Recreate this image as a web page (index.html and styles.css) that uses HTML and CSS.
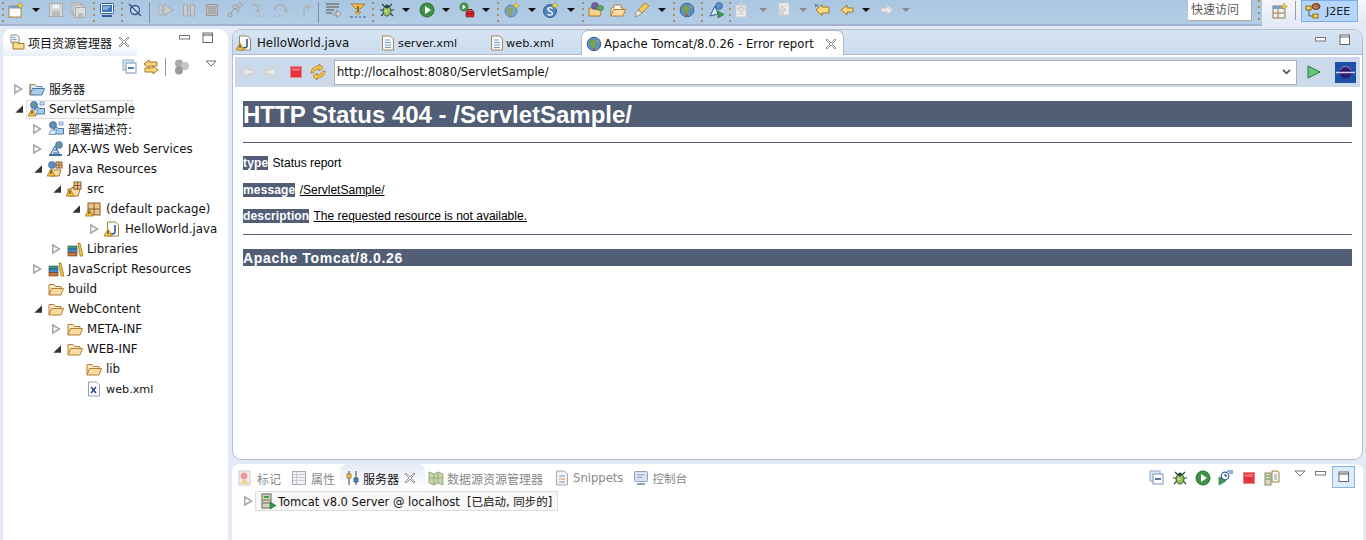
FILE: index.html
```html
<!DOCTYPE html>
<html lang="zh">
<head>
<meta charset="utf-8">
<title>Eclipse J2EE</title>
<link rel="stylesheet" href="styles.css">
</head>
<body>
<svg class="defs" aria-hidden="true">
  <defs>
    <symbol id="warn" viewBox="0 0 16 16"><path d="M4 8 8 15H0z" fill="#f6c544" stroke="#a8741a" stroke-width=".8"/><path d="M4 10v3" stroke="#222" stroke-width="1"/></symbol>
    <symbol id="new" viewBox="0 0 16 16"><rect x="1" y="4" width="12" height="11" fill="#fff" stroke="#a5853a"/><rect x="1" y="4" width="12" height="2.5" fill="#7a9cc8"/><path d="M12 0l1 2.5 2.5 1-2.5 1-1 2.5-1-2.5-2.5-1 2.500-1z" fill="#f8d648" stroke="#b08a20" stroke-width=".5"/></symbol>
    <symbol id="save" viewBox="0 0 16 16"><rect x="1.500" y="1.500" width="13" height="13" fill="#d8d8d8" stroke="#aaa"/><rect x="4" y="2" width="8" height="5" fill="#f2f2f2" stroke="#b5b5b5" stroke-width=".6"/><rect x="4" y="9" width="8" height="5" fill="#bbb"/></symbol>
    <symbol id="saveall" viewBox="0 0 16 16"><rect x="1" y="1" width="10" height="10" fill="#d8d8d8" stroke="#aaa"/><rect x="3" y="3" width="10" height="10" fill="#d8d8d8" stroke="#aaa"/><rect x="5.500" y="5.500" width="10" height="10" fill="#ddd" stroke="#aaa"/><rect x="8" y="11" width="5" height="4" fill="#bbb"/></symbol>
    <symbol id="monitor" viewBox="0 0 16 16"><rect x="1.500" y="1.500" width="13" height="10" rx="1" fill="#fff" stroke="#2e5c98"/><rect x="3" y="3" width="10" height="7" fill="#3f74b8"/><path d="M4 5h7M4 7h5" stroke="#cfe0f4"/><path d="M3 14h10" stroke="#2e5c98" stroke-width="2"/></symbol>
    <symbol id="skip" viewBox="0 0 16 16"><circle cx="8" cy="8" r="4.500" fill="#c9d6ea" stroke="#2c4f86" stroke-width="1.300"/><path d="M2 2 14 14" stroke="#2c4f86" stroke-width="1.300"/></symbol>
    <symbol id="resume" viewBox="0 0 16 16"><rect x="1" y="3" width="3" height="10" fill="#ccc" stroke="#aaa" stroke-width=".7"/><path d="M6 2.500 15 8l-9 5.500z" fill="#ccc" stroke="#a8a8a8"/></symbol>
    <symbol id="pause" viewBox="0 0 16 16"><rect x="2.500" y="3" width="4" height="11" fill="#ccc" stroke="#aaa"/><rect x="9.500" y="3" width="4" height="11" fill="#ccc" stroke="#aaa"/></symbol>
    <symbol id="stopg" viewBox="0 0 16 16"><rect x="2.500" y="2.500" width="11" height="11" fill="#bbb" stroke="#999"/><rect x="4" y="4" width="8" height="8" fill="#aaa"/></symbol>
    <symbol id="disc" viewBox="0 0 16 16"><path d="M3 13 8 5l3 5 3-8" fill="none" stroke="#aaa" stroke-width="1.200"/><circle cx="3" cy="13" r="2" fill="#ccc" stroke="#999"/><circle cx="8" cy="5" r="2" fill="#ccc" stroke="#999"/><circle cx="13" cy="3" r="2" fill="#ccc" stroke="#999"/></symbol>
    <symbol id="into" viewBox="0 0 16 16"><path d="M1 3h7v7" fill="none" stroke="#b0b0b0" stroke-width="1.500"/><path d="M5 8h6l-3 3z" fill="#b0b0b0"/><path d="M1 14h2M5 14h2M9 14h2M13 14h2" stroke="#aaa"/></symbol>
    <symbol id="over" viewBox="0 0 16 16"><path d="M2 8a5.500 5.500 0 0 1 11 0" fill="none" stroke="#b0b0b0" stroke-width="1.500"/><path d="M10 8h6l-3 3z" fill="#b0b0b0"/><path d="M1 14h2M5 14h2M9 14h2" stroke="#aaa"/></symbol>
    <symbol id="ret" viewBox="0 0 16 16"><path d="M8 14V5h6" fill="none" stroke="#b0b0b0" stroke-width="1.500"/><path d="M11 2v6l4-3z" fill="#b0b0b0"/><path d="M1 14h2M5 14h1" stroke="#aaa"/></symbol>
    <symbol id="drop" viewBox="0 0 16 16"><path d="M1 2h13M1 5h13M1 8h8M1 11h6" stroke="#777" stroke-width="1.300"/><path d="M9 11h3V8l4 4-4 3.500V13H9z" fill="#ddd" stroke="#777" stroke-width=".7"/></symbol>
    <symbol id="usefilter" viewBox="0 0 16 16"><path d="M1 2h14l-5 5H6z" fill="#f2c14e" stroke="#9a6a10" stroke-width=".8"/><path d="M8 4v7" stroke="#9a6a10" stroke-width="2"/><path d="M5 10h6l-3 3z" fill="#f2c14e" stroke="#9a6a10" stroke-width=".6"/><path d="M0 15h3M5 15h2M9 15h2M13 15h3" stroke="#2c5c9e"/></symbol>
    <symbol id="bug" viewBox="0 0 16 16"><path d="M3 2l3 3M13 2l-3 3M1 8h3M12 8h3M2 14l3-3M14 14l-3-3" stroke="#1f3e3e" stroke-width="1.100"/><ellipse cx="8" cy="9" rx="4" ry="5" fill="#9cc15a" stroke="#2e5b3a"/><circle cx="8" cy="4.500" r="2" fill="#1f4a3a"/><circle cx="7" cy="9" r="1" fill="#e4efb8"/></symbol>
    <symbol id="run" viewBox="0 0 16 16"><circle cx="8" cy="8" r="7" fill="#3e9044" stroke="#2a6f34"/><path d="M6 4l6 4-6 4z" fill="#fff"/></symbol>
    <symbol id="runsrv" viewBox="0 0 16 16"><circle cx="5" cy="5" r="4.500" fill="#3e9044"/><path d="M3.500 2.500 7 5 3.500 7.500z" fill="#fff"/><rect x="7" y="9" width="8" height="6" rx="1" fill="#d9262e" stroke="#8c1118" stroke-width=".6"/><path d="M9 9V7.500h4V9M7 12h8" stroke="#8c1118" fill="none"/></symbol>
    <symbol id="globe" viewBox="0 0 16 16"><circle cx="8" cy="8" r="6.800" fill="#5b8fc9" stroke="#3d628f"/><path d="M5 3l4 1 2 3-2 2 1 3-3 2-1-4-3-2z" fill="#7aa04a"/><path d="M11 3l2 2-1 1z" fill="#d8b24a"/><circle cx="8" cy="13" r="1" fill="#c24a2a"/></symbol>
    <symbol id="newglobe" viewBox="0 0 16 16"><circle cx="7" cy="9" r="6" fill="#7ba6d2" stroke="#5b7ea6"/><path d="M5 5l4 1 1 3-3 1 1 3-3 1-1-4-2-2z" fill="#8aa45a"/><path d="M12 0l1 2.500 2.500 1-2.500 1-1 2.500-1-2.500-2.500-1 2.500-1z" fill="#f8d648" stroke="#b08a20" stroke-width=".5"/></symbol>
    <symbol id="news" viewBox="0 0 16 16"><circle cx="7" cy="9" r="6.500" fill="#4f84bd" stroke="#2f5c92"/><path d="M9.500 6.500C8 5 4.500 5.500 5 7.500S9.500 9.500 9.500 11.500 6 13.500 4.500 12" fill="none" stroke="#fff" stroke-width="1.300"/><path d="M12 0l1 2.500 2.500 1-2.500 1-1 2.500-1-2.500-2.500-1 2.500-1z" fill="#f8d648" stroke="#b08a20" stroke-width=".5"/></symbol>
    <symbol id="folderp" viewBox="0 0 16 16"><path d="M1 14V6h13l-2 8z" fill="#f7d48a" stroke="#a5762c"/><circle cx="7" cy="4" r="3.500" fill="#7a5fa8" stroke="#4a3a78" stroke-width=".6"/><ellipse cx="12" cy="6" rx="3.500" ry="2.500" fill="#5cab5c" stroke="#2f6f2f" stroke-width=".6"/></symbol>
    <symbol id="folder" viewBox="0 0 16 16"><path d="M1 14V3.500h5l1.500 2H13V8" fill="#fbeac4" stroke="#b47f35"/><path d="M1 14l2.500-6.500H15.500L13 14z" fill="#fbdca0" stroke="#b47f35"/></symbol>
    <symbol id="folderb" viewBox="0 0 16 16"><path d="M1 14V3.500h5l1.500 2H13V8" fill="#dcecf8" stroke="#5e86ad"/><path d="M1 14l2.500-6.500H15.500L13 14z" fill="#a8cdea" stroke="#4f78a3"/><path d="M1 14V3.500h5" fill="none" stroke="#b47f35"/></symbol>
    <symbol id="foldero" viewBox="0 0 16 16"><path d="M1 14V6h3V3h7v3h2V8" fill="#fff" stroke="#b47f35"/><path d="M1 14l2.500-6.500H15.500L13 14z" fill="#fbdca0" stroke="#b47f35"/></symbol>
    <symbol id="pen" viewBox="0 0 16 16"><path d="M11 1l4 3-7 7-4-3z" fill="#f3c95b" stroke="#a5762c" stroke-width=".8"/><path d="M4 8l4 3-2 2-5 2 1-5z" fill="#e8e0d0" stroke="#888" stroke-width=".8"/></symbol>
    <symbol id="runner" viewBox="0 0 16 16"><circle cx="10" cy="4" r="3.500" fill="#5b8fc9" stroke="#3d628f" stroke-width=".7"/><path d="M1 14 6 4l3 8z" fill="#dbe7f5" stroke="#2f5c92"/><path d="M9 9l6 3.500L9 16z" fill="#3e9a4e" stroke="#226b30" stroke-width=".6"/></symbol>
    <symbol id="nextann" viewBox="0 0 16 16"><rect x="2" y="3" width="10" height="12" fill="#eee" stroke="#ccc"/><path d="M4 6h6M4 9h6M4 12h6" stroke="#ccc"/><path d="M6 0v6H3l4 5 4-5H8V0z" fill="#ddd" stroke="#bbb" stroke-width=".6"/></symbol>
    <symbol id="prevann" viewBox="0 0 16 16"><rect x="4" y="1" width="10" height="12" fill="#eee" stroke="#ccc"/><path d="M6 4h6M6 7h6" stroke="#ccc"/><path d="M6 15V9H3l4-5 4 5H8v6z" fill="#ddd" stroke="#bbb" stroke-width=".6"/></symbol>
    <symbol id="lastedit" viewBox="0 0 16 16"><path d="M8 4V1.500L2 7l6 5.500V10h7V4z" transform="translate(0 1)" fill="#fbd878" stroke="#a5762c"/><path d="M1 2l3 3M4 2 1 5" stroke="#2f5c92"/></symbol>
    <symbol id="back" viewBox="0 0 16 16"><path d="M8 3 2 8l6 5v-3h6V6H8z" fill="#fbd878" stroke="#a5762c"/></symbol>
    <symbol id="backg" viewBox="0 0 16 16"><path d="M8 3 2 8l6 5v-3h6V6H8z" fill="#e8e8e8" stroke="#c8c8c8"/></symbol>
    <symbol id="fwdg" viewBox="0 0 16 16"><path d="M8 3l6 5-6 5v-3H2V6h6z" fill="#e8e8e8" stroke="#c8c8c8"/></symbol>
    <symbol id="persp" viewBox="0 0 16 16"><rect x="1" y="3" width="12" height="12" fill="#f6efe0" stroke="#8a7a5a"/><rect x="1" y="3" width="12" height="3" fill="#7a9cc8"/><path d="M6 6v9M1 10h12" stroke="#8a7a5a"/><path d="M12 0l1 2.500 2.500 1-2.500 1-1 2.500-1-2.500-2.500-1 2.500-1z" fill="#f8d648" stroke="#b08a20" stroke-width=".5"/></symbol>
    <symbol id="j2ee" viewBox="0 0 16 16"><path d="M4 5v8h5" fill="none" stroke="#555"/><rect x="1" y="3" width="5" height="4" fill="#f7d048" stroke="#8a6a10"/><rect x="8" y="11" width="5" height="4" fill="#f7d048" stroke="#8a6a10"/><ellipse cx="11" cy="3.500" rx="4" ry="3" fill="#a5603a" stroke="#6e3a1c"/><path d="M9 2l4 3M8.500 3.500l3 2.500" stroke="#e8c4a0" stroke-width=".6"/></symbol>
    <symbol id="project" viewBox="0 0 16 16"><path d="M2 1h6l2 2v6H2z" fill="#f4f7fc" stroke="#8a8a8a"/><path d="M3.500 3.500h3M3.500 5.500h4" stroke="#7a9cc8"/><path d="M4 15V8h4l1 1.500h6V15z" fill="#f9dc8e" stroke="#a5762c"/></symbol>
    <symbol id="collapse" viewBox="0 0 16 16"><rect x="1" y="1" width="10" height="10" fill="#dbe7f5" stroke="#8ea7c6"/><rect x="4" y="4" width="10" height="10" fill="#fff" stroke="#7693b8"/><path d="M6 9h6" stroke="#1f4e8c" stroke-width="1.500"/></symbol>
    <symbol id="link" viewBox="0 0 16 16"><path d="M6 1 1 5l5 4V7h8V3H6z" fill="#f9d678" stroke="#a5762c"/><path d="M10 7l5 4-5 4v-2H2V9h8z" fill="#f9d678" stroke="#a5762c"/></symbol>
    <symbol id="filters" viewBox="0 0 16 16"><circle cx="5" cy="4.500" r="4" fill="#aaa"/><circle cx="11" cy="7" r="4" fill="#c4c4c4"/><circle cx="5" cy="11.500" r="4" fill="#999"/></symbol>
    <symbol id="dd-web" viewBox="0 0 16 16"><path d="M6 13V6h3l1 1.500h5.500V13z" fill="#a8cdea" stroke="#4f78a3"/><path d="M1 13.500 3 9h6l-2 4.500z" fill="#dcecf8" stroke="#4f78a3" stroke-width=".7"/><circle cx="5" cy="4" r="3.500" fill="#5b8fc9" stroke="#3d628f" stroke-width=".7"/><path d="M4 2l2 1-1 2-2-1z" fill="#7aa04a"/><path d="M11 1h4v3h-4z" fill="#dbe7f5" stroke="#4f78a3" stroke-width=".7"/></symbol>
    <symbol id="services" viewBox="0 0 16 16"><path d="M2 14l5-9 5 9z" fill="#dbe7f5" stroke="#2f5c92"/><path d="M1 14h13" stroke="#2f5c92" stroke-width="1.500"/><path d="M5 12h5M6 9h3" stroke="#2f5c92"/><circle cx="11" cy="4" r="3.500" fill="#5b8fc9" stroke="#3d628f" stroke-width=".6"/><path d="M10 2l2 1v2l-2 1z" fill="#7aa04a"/></symbol>
    <symbol id="jres" viewBox="0 0 16 16"><path d="M2 15V9h11l-2 6z" fill="#f7dca4" stroke="#a5762c"/><circle cx="4" cy="4" r="3.500" fill="#5b8fc9" stroke="#3d628f" stroke-width=".6"/><rect x="8" y="1" width="6" height="6" fill="#e9c78c" stroke="#8a5a2c"/><path d="M11 1v6M8 4h6" stroke="#8a5a2c"/></symbol>
    <symbol id="src" viewBox="0 0 16 16"><path d="M1 15V8h4V6h3V8h5l-2 7z" fill="#f7dca4" stroke="#a5762c"/><rect x="7" y="1" width="7" height="7" fill="#e9c78c" stroke="#8a5a2c"/><path d="M10.500 1v7M7 4.500h7" stroke="#8a5a2c"/></symbol>
    <symbol id="pkg" viewBox="0 0 16 16"><rect x="2" y="2" width="12" height="12" fill="#e9c78c" stroke="#8a5a2c"/><path d="M8 2v12M2 8h12" stroke="#8a5a2c"/></symbol>
    <symbol id="jfile" viewBox="0 0 16 16"><path d="M2.500 1h8l3 3v11h-11z" fill="#fdfdf6" stroke="#9a8458"/><path d="M10 4v7c0 2-3 2.500-3.500 1" fill="none" stroke="#2c5c9e" stroke-width="1.600"/></symbol>
    <symbol id="libs" viewBox="0 0 16 16"><rect x="1" y="5" width="9" height="3" fill="#3f9a7a" stroke="#1f5a4a" stroke-width=".6"/><rect x="1" y="8" width="9" height="3.500" fill="#4a86c4" stroke="#1e4f80" stroke-width=".6"/><rect x="1" y="11.500" width="9" height="3.500" fill="#c0783c" stroke="#6e3a1c" stroke-width=".6"/><path d="M11 2h2l3 13h-3z" fill="#f2c14e" stroke="#9a6a10" stroke-width=".7"/></symbol>
    <symbol id="xfile" viewBox="0 0 16 16"><path d="M2.500 1h8l3 3v11h-11z" fill="#fdfdfd" stroke="#8fa0b8"/><path d="M5 6l5 6M10 6l-5 6" stroke="#1f3e80" stroke-width="1.400"/></symbol>
    <symbol id="doc" viewBox="0 0 16 16"><path d="M2.500 1h8l3 3v11h-11z" fill="#f6f8fb" stroke="#a08a5c"/><path d="M5 5h5M5 7.500h6M5 10h6M5 12.500h6" stroke="#7a9cc8"/></symbol>
    <symbol id="stopr" viewBox="0 0 16 16"><rect x="2.500" y="2.500" width="11" height="11" fill="#e8303a" stroke="#e08a8e"/><rect x="4" y="4" width="8" height="3" fill="#f46a70"/></symbol>
    <symbol id="refresh" viewBox="0 0 16 16"><path d="M9 0l4 3.500L9 7V5C6 5 4 6.500 3.500 9H1C1 5 4.500 2 9 2z" fill="#f9c83e" stroke="#a5762c" stroke-width=".8"/><path d="M7 16l-4-3.500L7 9v2c3 0 5-1.500 5.500-4H15c0 4-3.500 7-8 7z" fill="#f9c83e" stroke="#a5762c" stroke-width=".8"/></symbol>
    <symbol id="go" viewBox="0 0 16 16"><path d="M2 2l12 6-12 6z" fill="#6cc07a" stroke="#2a7a3e"/></symbol>
    <symbol id="eclipse" viewBox="0 0 21 21"><rect width="21" height="21" fill="#1c4fa8"/><circle cx="10.500" cy="10.500" r="6" fill="#2b1e6a"/><path d="M1 10.500h19" stroke="#d8c8f0" stroke-width="1.500"/><path d="M5 8a6 6 0 0 1 11 0" fill="none" stroke="#a888e0"/></symbol>
    <symbol id="marker" viewBox="0 0 16 16"><path d="M2 1h11v14H2z" fill="#eee" stroke="#ccc"/><circle cx="7" cy="6" r="3.500" fill="#ee9a9a"/><path d="M3 14l3-4h3l3 4z" fill="#f3d68a"/></symbol>
    <symbol id="props" viewBox="0 0 16 16"><rect x="1.500" y="1.500" width="13" height="13" fill="#f2f2f2" stroke="#aab"/><path d="M2 4.500h12M2 7.500h12M2 10.500h12M5.500 2v12" stroke="#c5cbd8"/></symbol>
    <symbol id="servers" viewBox="0 0 16 16"><path d="M4 1v14M11 1v14" stroke="#444"/><rect x="2" y="4" width="4" height="4" fill="#f2c14e" stroke="#8a6a10" stroke-width=".7"/><rect x="9" y="8" width="4" height="4" fill="#4a86c4" stroke="#1e4f80" stroke-width=".7"/></symbol>
    <symbol id="dsrc" viewBox="0 0 16 16"><path d="M1 2l5 2 4-2 5 2v11l-5-2-4 2-5-2z" fill="#c6d8a4" stroke="#9aa98a"/><path d="M6 4v11M10 2v11M1 8h14" stroke="#9aa98a"/></symbol>
    <symbol id="snip" viewBox="0 0 16 16"><path d="M2.500 1h8l3 3v11h-11z" fill="#f4f4f4" stroke="#aaa"/><path d="M5 6h6" stroke="#7a9cc8"/><path d="M5 9h6" stroke="#e08a6a"/><path d="M5 12h6" stroke="#7a9cc8"/></symbol>
    <symbol id="console" viewBox="0 0 16 16"><rect x="1.500" y="1.500" width="13" height="10" rx="1" fill="#d8e4f2" stroke="#8da3bf"/><path d="M4 5h7M4 7.500h5" stroke="#8da3bf"/><path d="M4 14h8" stroke="#8da3bf" stroke-width="2"/></symbol>
    <symbol id="profile" viewBox="0 0 16 16"><path d="M1 15V7l7 4z" fill="#3e9a4e" stroke="#226b30" stroke-width=".6"/><circle cx="7" cy="6" r="3.800" fill="#fff" stroke="#2c5c9e" stroke-width="1.200"/><path d="M7 4v2h2M9 1h6M11 3h4" stroke="#2c5c9e"/></symbol>
    <symbol id="publish" viewBox="0 0 16 16"><rect x="1" y="3" width="6" height="12" fill="#d8d8c0" stroke="#8a8a6a"/><path d="M2 6h4M2 9h4" stroke="#5a9a5a"/><path d="M8 1h6l1 2v9H8z" fill="#f6f8fb" stroke="#a5862c"/><path d="M10 5h3M10 7h3M10 9h3" stroke="#7a9cc8"/></symbol>
    <symbol id="server" viewBox="0 0 16 16"><rect x="2" y="1" width="9" height="14" fill="#d4d4b8" stroke="#666"/><rect x="4" y="3" width="5" height="2" fill="#4aa04a"/><path d="M3 7h7M3 10h7" stroke="#666"/><path d="M10 9l6 3.500-6 3.500z" fill="#2e9a4e" stroke="#1e6b30" stroke-width=".6"/></symbol>
    <symbol id="close" viewBox="0 0 12 12"><path d="M2 1 6 5l4-4 1 1-4 4 4 4-1 1-4-4-4 4-1-1 4-4-4-4z" fill="#fff" stroke="#888" stroke-width=".9"/></symbol>
    <symbol id="min" viewBox="0 0 12 12"><rect x=".5" y="3.500" width="10" height="3.500" fill="#fff" stroke="#777"/></symbol>
    <symbol id="max" viewBox="0 0 12 12"><rect x="1" y="1" width="9.500" height="9.500" fill="#fff" stroke="#666"/><path d="M1 3h9.500" stroke="#666" stroke-width="1.200"/></symbol>
    <symbol id="viewmenu" viewBox="0 0 12 8"><path d="M1 1h10L6 6z" fill="#fff" stroke="#777"/></symbol>
  </defs>
</svg>

<header class="topbar">
  <div class="toolbar">
    <span class="grip ml2"></span>
    <svg class="ic ml4"><use href="#new"/></svg><i class="dd ml8"></i>
    <svg class="ic ml8"><use href="#save"/></svg><svg class="ic ml6"><use href="#saveall"/></svg>
    <span class="grip ml7"></span><svg class="ic ml4"><use href="#monitor"/></svg>
    <span class="grip ml6"></span><svg class="ic ml4"><use href="#skip"/></svg>
    <span class="vsep ml6"></span>
    <svg class="ic ml8"><use href="#resume"/></svg><svg class="ic ml7"><use href="#pause"/></svg><svg class="ic ml7"><use href="#stopg"/></svg><svg class="ic ml7"><use href="#disc"/></svg><svg class="ic ml7"><use href="#into"/></svg><svg class="ic ml7"><use href="#over"/></svg><svg class="ic ml7"><use href="#ret"/></svg>
    <span class="vsep ml6"></span>
    <svg class="ic ml6"><use href="#drop"/></svg><svg class="ic ml9"><use href="#usefilter"/></svg>
    <span class="grip ml6"></span>
    <svg class="ic ml5"><use href="#bug"/></svg><i class="dd ml7"></i>
    <svg class="ic ml9"><use href="#run"/></svg><i class="dd ml7"></i>
    <svg class="ic ml9"><use href="#runsrv"/></svg><i class="dd ml7"></i>
    <span class="grip ml7"></span>
    <svg class="ic ml5"><use href="#newglobe"/></svg><i class="dd ml8"></i>
    <svg class="ic ml7"><use href="#news"/></svg><i class="dd ml8"></i>
    <span class="grip ml7"></span>
    <svg class="ic ml4"><use href="#folderp"/></svg><svg class="ic ml6"><use href="#foldero"/></svg><svg class="ic ml8"><use href="#pen"/></svg><i class="dd ml8"></i>
    <span class="grip ml7"></span><svg class="ic ml4"><use href="#globe"/></svg>
    <span class="grip ml6"></span><svg class="ic ml6"><use href="#runner"/></svg>
    <span class="grip ml4"></span>
    <svg class="ic ml3"><use href="#nextann"/></svg><i class="dd dd-g ml9"></i>
    <svg class="ic ml8"><use href="#prevann"/></svg><i class="dd dd-g ml8"></i>
    <svg class="ic ml7"><use href="#lastedit"/></svg>
    <svg class="ic ml9"><use href="#back"/></svg><i class="dd ml7"></i>
    <svg class="ic ml9"><use href="#fwdg"/></svg><i class="dd dd-g ml7"></i>
    <div class="quick"><span class="quick-box">快速访问</span><span class="grip ml6"></span></div>
  </div>
  <div class="persp">
    <svg class="ic"><use href="#persp"/></svg>
    <span class="vsep-p"></span>
    <div class="persp-btn"><svg class="ic"><use href="#j2ee"/></svg><span>J2EE</span></div>
  </div>
</header>

<div class="workbench">
  <aside class="explorer">
    <div class="view-head">
      <div class="view-tab">
        <svg class="ic"><use href="#project"/></svg>
        <span>项目资源管理器</span>
        <svg class="x"><use href="#close"/></svg>
      </div>
      <div class="view-ctl">
        <svg class="x"><use href="#min"/></svg>
        <svg class="x"><use href="#max"/></svg>
      </div>
    </div>
    <div class="view-tools">
      <svg class="ic"><use href="#collapse"/></svg>
      <svg class="ic"><use href="#link"/></svg>
      <span class="tool-sep"></span>
      <svg class="ic"><use href="#filters"/></svg>
      <svg class="menu"><use href="#viewmenu"/></svg>
    </div>
    <ul class="tree">
      <li class="row l0"><i class="arr"></i><svg class="ic"><use href="#folderb"/></svg><span class="lbl lbl-cjk">服务器</span></li>
      <li class="row l0"><i class="arr open"></i><span class="sel"><span class="iw"><svg class="ic"><use href="#dd-web"/></svg><svg class="wn"><use href="#warn"/></svg></span><span class="lbl">ServletSample</span></span></li>
      <li class="row l1"><i class="arr"></i><svg class="ic"><use href="#dd-web"/></svg><span class="lbl lbl-cjk">部署描述符:</span></li>
      <li class="row l1"><i class="arr"></i><svg class="ic"><use href="#services"/></svg><span class="lbl">JAX-WS Web Services</span></li>
      <li class="row l1"><i class="arr open"></i><span class="iw"><svg class="ic"><use href="#jres"/></svg><svg class="wn"><use href="#warn"/></svg></span><span class="lbl">Java Resources</span></li>
      <li class="row l2"><i class="arr open"></i><span class="iw"><svg class="ic"><use href="#src"/></svg><svg class="wn"><use href="#warn"/></svg></span><span class="lbl">src</span></li>
      <li class="row l3"><i class="arr open"></i><span class="iw"><svg class="ic"><use href="#pkg"/></svg><svg class="wn"><use href="#warn"/></svg></span><span class="lbl">(default package)</span></li>
      <li class="row l4"><i class="arr"></i><span class="iw"><svg class="ic"><use href="#jfile"/></svg><svg class="wn"><use href="#warn"/></svg></span><span class="lbl">HelloWorld.java</span></li>
      <li class="row l2"><i class="arr"></i><svg class="ic"><use href="#libs"/></svg><span class="lbl">Libraries</span></li>
      <li class="row l1"><i class="arr"></i><svg class="ic"><use href="#libs"/></svg><span class="lbl">JavaScript Resources</span></li>
      <li class="row l1"><i class="arr none"></i><svg class="ic"><use href="#folder"/></svg><span class="lbl">build</span></li>
      <li class="row l1"><i class="arr open"></i><svg class="ic"><use href="#folder"/></svg><span class="lbl">WebContent</span></li>
      <li class="row l2"><i class="arr"></i><svg class="ic"><use href="#folder"/></svg><span class="lbl">META-INF</span></li>
      <li class="row l2"><i class="arr open"></i><svg class="ic"><use href="#folder"/></svg><span class="lbl">WEB-INF</span></li>
      <li class="row l3"><i class="arr none"></i><svg class="ic"><use href="#folder"/></svg><span class="lbl">lib</span></li>
      <li class="row l3"><i class="arr none"></i><svg class="ic"><use href="#xfile"/></svg><span class="lbl lbl-xml">web.xml</span></li>
    </ul>
  </aside>

  <div class="right">
    <section class="editor">
      <div class="ed-tabs">
        <div class="ed-tab t-hello"><span class="iw"><svg class="ic"><use href="#jfile"/></svg><svg class="wn"><use href="#warn"/></svg></span><span>HelloWorld.java</span></div>
        <div class="ed-tab t-server"><svg class="ic"><use href="#doc"/></svg><span>server.xml</span></div>
        <div class="ed-tab t-web"><svg class="ic"><use href="#doc"/></svg><span>web.xml</span></div>
        <div class="ed-tab active"><svg class="ic"><use href="#globe"/></svg><span>Apache Tomcat/8.0.26 - Error report</span><svg class="x"><use href="#close"/></svg></div>
        <div class="view-ctl ed-ctl">
          <svg class="x"><use href="#min"/></svg>
          <svg class="x"><use href="#max"/></svg>
        </div>
      </div>
      <div class="browser-bar">
        <svg class="ic"><use href="#backg"/></svg>
        <svg class="ic"><use href="#fwdg"/></svg>
        <svg class="ic"><use href="#stopr"/></svg>
        <svg class="ic"><use href="#refresh"/></svg>
        <div class="url"><span>http://localhost:8080/ServletSample/</span><svg class="chev" viewBox="0 0 10 8"><path d="M1 1l4 4 4-4" fill="none" stroke="#555" stroke-width="2"/></svg></div>
        <svg class="ic go"><use href="#go"/></svg>
        <svg class="ecl"><use href="#eclipse"/></svg>
      </div>
      <article class="page">
        <h1>HTTP Status 404 - /ServletSample/</h1>
        <div class="line"></div>
        <p><b>type</b> Status report</p>
        <p><b>message</b> <u>/ServletSample/</u></p>
        <p><b>description</b> <u>The requested resource is not available.</u></p>
        <div class="line line2"></div>
        <h3>Apache Tomcat/8.0.26</h3>
      </article>
    </section>

    <section class="bottom">
      <div class="bt-tabs">
        <div class="bt-tab"><svg class="ic"><use href="#marker"/></svg><span>标记</span></div>
        <div class="bt-tab"><svg class="ic"><use href="#props"/></svg><span>属性</span></div>
        <div class="bt-tab active"><svg class="ic"><use href="#servers"/></svg><span>服务器</span><svg class="x"><use href="#close"/></svg></div>
        <div class="bt-tab g3"><svg class="ic"><use href="#dsrc"/></svg><span>数据源资源管理器</span></div>
        <div class="bt-tab g2"><svg class="ic"><use href="#snip"/></svg><span>Snippets</span></div>
        <div class="bt-tab g2"><svg class="ic"><use href="#console"/></svg><span>控制台</span></div>
        <div class="bt-tools">
          <svg class="ic"><use href="#collapse"/></svg>
          <svg class="ic"><use href="#bug"/></svg>
          <svg class="ic"><use href="#run"/></svg>
          <svg class="ic"><use href="#profile"/></svg>
          <svg class="ic"><use href="#stopr"/></svg>
          <svg class="ic"><use href="#publish"/></svg>
          <svg class="menu"><use href="#viewmenu"/></svg>
          <svg class="x"><use href="#min"/></svg>
          <span class="max-on"><svg class="x"><use href="#max"/></svg></span>
        </div>
      </div>
      <div class="srv-row">
        <i class="arr"></i>
        <div class="srv-sel"><svg class="ic"><use href="#server"/></svg><span>Tomcat v8.0 Server @ localhost&nbsp; [已启动, 同步的]</span></div>
      </div>
    </section>
  </div>
</div>
</body>
</html>
```
FILE: styles.css
```css
* { box-sizing: border-box; }
html, body { margin: 0; padding: 0; }
body {
  width: 1366px; height: 540px; overflow: hidden;
  background: #e4e9f6; color: #111;
  font: 11.8px "DejaVu Sans", "Noto Sans CJK SC", sans-serif;
  display: flex; flex-direction: column;
}
.defs { width: 0; height: 0; position: absolute; }
ul { list-style: none; margin: 0; padding: 0; }
.ic { width: 16px; height: 16px; flex: none; display: block; }
.x { width: 12px; height: 12px; flex: none; display: block; }
.menu { width: 12px; height: 8px; flex: none; display: block; }

.ml2 { margin-left: 2px; } .ml3 { margin-left: 3px; } .ml4 { margin-left: 4px; }
.ml5 { margin-left: 5px; } .ml6 { margin-left: 6px; } .ml7 { margin-left: 7px; }
.ml8 { margin-left: 8px; } .ml9 { margin-left: 9px; }

/* Top toolbar */
.topbar { height: 29px; display: flex; flex: none; }
.toolbar {
  width: 1262px; height: 26px; flex: none;
  display: flex; align-items: flex-start; padding-top: 2px;
  background: linear-gradient(#a9c6e0, #b4cde6);
  border-bottom: 2px solid #a3b3cd;
}
.grip {
  width: 2px; height: 20px; flex: none;
  background: repeating-linear-gradient(#a88f62 0 2px, transparent 2px 6px);
}
.vsep { width: 1px; height: 21px; background: #7f8fa8; flex: none; }
.dd {
  width: 8px; height: 4px; margin-top: 6px; flex: none;
  border-top: 4px solid #111; border-left: 4px solid transparent; border-right: 4px solid transparent;
}
.dd-g { border-top-color: #8b8b8b; }
.quick { margin-left: auto; display: flex; align-items: flex-start; margin-top: -2px; margin-right: 2px; }
.quick-box {
  width: 64px; height: 21px; background: #fff; color: #555;
  border: 1px solid #aaa; border-width: 0 1px 1px 0;
  font-size: 12px; line-height: 21px; padding-left: 3px;
}
.persp {
  flex: 1; height: 26px; display: flex; align-items: flex-start; gap: 0;
  padding-left: 10px; background: linear-gradient(#f2f5fb, #e4e9f6);
}
.persp > .ic { margin-top: 3px; }
.vsep-p { width: 1px; height: 19px; background: #98a0ac; margin: 1px 0 0 7px; }
.persp-btn {
  width: 57px; height: 22px; margin-left: 5px;
  background: #b5d6fa; border: 1px solid #7aaee8;
  display: flex; align-items: center; gap: 5px; padding-left: 3px; color: #222;
  font-size: 11px;
}

/* Workbench */
.workbench { flex: 1; display: flex; padding-left: 3px; min-height: 0; }
.explorer {
  width: 225px; flex: none; background: #fff; border-radius: 9px 9px 0 0;
  display: flex; flex-direction: column;
}
.view-head { height: 27px; display: flex; flex: none; }
.view-tab {
  width: 134px; display: flex; align-items: center; padding: 0 0 1px 6px; gap: 3px;
  border-radius: 9px 9px 0 0; font-size: 12px;
  background: linear-gradient(#fff 55%, #e8edf8);
}
.view-tab .x { margin-left: 3px; }
.view-ctl { display: flex; gap: 11px; margin-left: auto; margin-right: 14px; padding-top: 3px; }
.view-tools {
  height: 22px; flex: none; display: flex; align-items: center;
  padding-left: 119px; padding-bottom: 1px;
}
.view-tools .ic + .ic { margin-left: 5px; }
.tool-sep { width: 1px; height: 18px; background: #999; margin: 0 8px 0 6px; }
.view-tools .menu { margin-left: 15px; margin-top: -6px; }

.tree { padding-top: 1px; }
.row { height: 20px; display: flex; align-items: center; white-space: nowrap; }
.l0 { padding-left: 11px; } .l1 { padding-left: 30px; } .l2 { padding-left: 49px; }
.l3 { padding-left: 68px; } .l4 { padding-left: 87px; }
.arr {
  width: 9px; height: 11px; flex: none; margin-right: 6px; display: block;
  clip-path: polygon(0 0, 100% 50%, 0 100%);
  background: #a8a8a8;
  position: relative;
}
.arr::after {
  content: ""; position: absolute; inset: 0;
  background: #fff; clip-path: polygon(1.5px 3px, 6px 50%, 1.5px 8px);
}
.arr.open { clip-path: polygon(100% 15%, 100% 85%, 15% 85%); background: #333; }
.arr.open::after { display: none; }
.arr.none { visibility: hidden; }
.lbl { margin-left: 4px; }
.lbl-cjk { margin-bottom: 2px; font-size: 12px; }
.lbl-xml { font-size: 11.2px; }
.iw { position: relative; width: 16px; height: 16px; flex: none; display: block; }
.wn { position: absolute; left: -1px; top: 0; width: 16px; height: 16px; }
.sel {
  display: flex; align-items: center; height: 19px; margin-left: -3px; width: 107px; padding: 0 0 0 2px;
  border: 1px solid #ddd; background: #f8f8f8;
}

.right { flex: 1; display: flex; flex-direction: column; margin-left: 4px; min-width: 0; margin-right: 3px; }
.editor {
  height: 431px; flex: none; background: #fff;
  border: 1px solid #b4bccf; border-radius: 9px; display: flex; flex-direction: column; overflow: hidden;
}
.ed-tabs {
  height: 25px; flex: none; display: flex; align-items: stretch; position: relative;
  background: linear-gradient(#d6e4f2, #cbdcee); border-bottom: 1px solid #b0b9cf;
}
.ed-tab { display: flex; align-items: center; white-space: nowrap; padding-top: 2px; }
.t-hello { width: 147px; padding-left: 4px; gap: 4px; }
.t-server { width: 109px; gap: 2px; font-size: 11.3px; }
.t-web { width: 92px; gap: 1px; font-size: 11.3px; }
.ed-tab.active {
  width: 263px; padding-left: 4px; gap: 2px; background: #fff; margin-top: 0;
  border: 1px solid #b0b9cf; border-bottom: 0; border-radius: 7px 7px 0 0;
  height: 25px; font-size: 11.7px;
}
.ed-tab.active .x { margin-left: 9px; }
.ed-ctl { padding-top: 4px; margin-right: 11px; gap: 12px; }
.browser-bar {
  height: 30px; flex: none; margin: 2px 2px 0; display: flex; align-items: center;
  background: #cbd9ea; padding: 0 3px 0 5px; gap: 7px;
}
.browser-bar .ic:nth-child(3) { margin-left: 2px; }
.browser-bar .ic:nth-child(4) { margin-left: -1px; }
.url {
  width: 963px; height: 25px; margin-left: 1px; background: #fff; border: 1px solid #b0b0b0;
  display: flex; align-items: center; justify-content: space-between; padding: 0 5px 0 2px;
  font-size: 11.5px;
}
.chev { width: 9px; height: 7px; }
.go { margin-left: 2px; }
.ecl { width: 21px; height: 21px; margin-left: 6px; }
.page { flex: 1; padding: 14px 10px 0; font-family: "Liberation Sans", sans-serif; color: #000; }
.page h1 {
  margin: 0; height: 26px; background: #525d76; color: #fff;
  font-size: 24px; font-weight: bold; line-height: 28px; letter-spacing: 0;
}
.line { height: 1px; background: #525d76; margin: 15px 0 12px; }
.page p { margin: 0 0 10px; height: 16px; font-size: 12px; line-height: 16px; }
.page p:first-of-type { margin-bottom: 11px; }
.page p b { background: #525d76; color: #fff; font-weight: bold; letter-spacing: .15px; margin-right: 1px; }
.line2 { margin: 8px 0 14px; }
.page h3 {
  margin: 0; height: 17px; background: #525d76; color: #fff;
  font-size: 14px; font-weight: bold; line-height: 18px; letter-spacing: .7px;
}

.bottom {
  flex: 1; margin-top: 4px; background: #fff; border-radius: 7px 7px 0 0; min-height: 0;
}
.bt-tabs { height: 26px; display: flex; align-items: stretch; padding-left: 5px; }
.bt-tab { display: flex; align-items: center; gap: 4px; color: #888; white-space: nowrap; margin-right: 10px; font-size: 12px; padding-top: 2px; }
.bt-tab.g3 { gap: 3px; margin-right: 11px; }
.bt-tab.g2 { gap: 3px; font-size: 11.6px; }
.bt-tab.active {
  color: #111; gap: 2px; margin: 0 3px 0 -5px; padding: 2px 8px 0 5px; width: 85px;
  background: linear-gradient(#e6ebf6, #fff); border-radius: 7px 7px 0 0;
}
.bt-tab.active .x { margin-left: 3px; }
.bt-tools { margin-left: auto; display: flex; align-items: center; gap: 7px; padding: 2px 8px 0 0; }
.bt-tools .menu { margin-left: 7px; margin-top: -8px; }
.bt-tools > .x { margin-left: 2px; margin-top: -8px; }
.max-on { width: 23px; height: 22px; margin: -2px 0 0 -2px; background: #dcecfd; border: 1px solid #86b4ea; display: flex; align-items: center; justify-content: center; }
.srv-row { display: flex; align-items: center; height: 20px; margin-top: 1px; padding-left: 12px; }
.srv-row .arr { margin-right: 2px; }
.srv-sel {
  display: flex; align-items: center; gap: 2px; height: 20px; width: 303px; padding-left: 4px;
  border: 1px solid #ddd; background: #f8f8f8; white-space: nowrap; font-size: 11.5px;
}
```
